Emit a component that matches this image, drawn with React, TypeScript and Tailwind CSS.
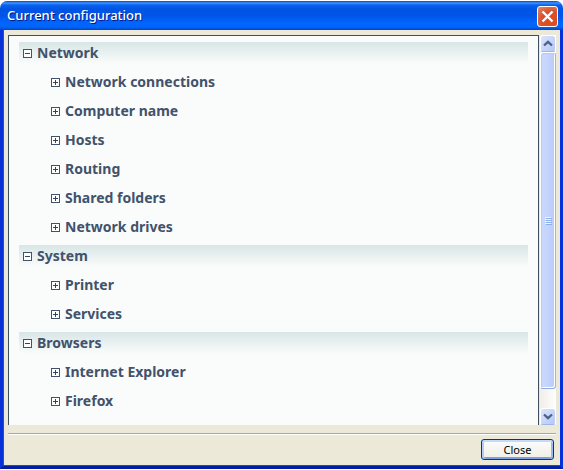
import { useState } from "react";
import { clsx } from "clsx";

type Section = {
  title: string;
  items: string[];
};

const sections: Section[] = [
  {
    title: "Network",
    items: ["Network connections", "Computer name", "Hosts", "Routing", "Shared folders", "Network drives"],
  },
  { title: "System", items: ["Printer", "Services"] },
  { title: "Browsers", items: ["Internet Explorer", "Firefox"] },
];

function ToggleBox({ open }: { open: boolean }) {
  return (
    <svg width="9" height="9" viewBox="0 0 9 9" shapeRendering="crispEdges" className="shrink-0" aria-hidden="true">
      <path d="M0.5 0.5h8v8h-8z" fill="#fff" stroke="#42526b" />
      <path d={open ? "M2 4.5h5" : "M2 4.5h5M4.5 2v5"} stroke="#34445c" />
    </svg>
  );
}

function TreeItem({ label }: { label: string }) {
  const [open, setOpen] = useState(false);

  return (
    <li className="flex h-[22px] pl-8">
      <button type="button" aria-expanded={open} onClick={() => setOpen(!open)} className="flex items-center gap-[5px]">
        <ToggleBox open={open} />
        <span>{label}</span>
      </button>
    </li>
  );
}

function TreeSection({ title, items }: Section) {
  const [open, setOpen] = useState(true);

  return (
    <li className="flex flex-col gap-[7px]">
      <button
        type="button"
        aria-expanded={open}
        onClick={() => setOpen(!open)}
        className="flex h-[22px] items-center gap-[5px] bg-linear-to-b from-[#d8e6e6] to-[#fafcfb] pl-1 text-left"
      >
        <ToggleBox open={open} />
        <span>{title}</span>
      </button>
      {open ? (
        <ul className="flex flex-col gap-[7px]">
          {items.map((item) => (
            <TreeItem key={item} label={item} />
          ))}
        </ul>
      ) : null}
    </li>
  );
}

function ScrollArrow({ direction }: { direction: "up" | "down" }) {
  return (
    <button
      type="button"
      aria-label={direction === "up" ? "Scroll up" : "Scroll down"}
      className="flex h-[17px] shrink-0 items-center justify-center rounded-[3px] border border-white border-b-[#9db5e8] bg-linear-to-br from-[#dbe5ff] to-[#b4c8f6]"
    >
      <svg
        width="10"
        height="7"
        viewBox="0 0 10 7"
        className={clsx(direction === "down" && "rotate-180")}
        aria-hidden="true"
      >
        <path d="M1 5.5 5 1.8 9 5.5" fill="none" stroke="#4d6185" strokeWidth="2.3" />
      </svg>
    </button>
  );
}

function ScrollBar() {
  return (
    <div className="flex w-4 shrink-0 flex-col bg-linear-to-r from-[#f0eee8] to-[#fefefb]">
      <ScrollArrow direction="up" />
      <div className="flex flex-1 flex-col pb-[19px]">
        <div className="flex flex-1 items-center justify-center rounded-[3px] border border-white border-r-[#9db5e8] border-b-[#8daae2] bg-linear-to-r from-[#cad8fc] via-[#c5d4fc] to-[#b7cafa] shadow-[inset_1px_1px_0_#b7c9f5,inset_-1px_-1px_0_#fff]">
          <svg width="7" height="8" viewBox="0 0 7 8" shapeRendering="crispEdges" aria-hidden="true">
            <path d="M0 .5h6M0 2.5h6M0 4.5h6M0 6.5h6" stroke="#eef4fe" />
            <path d="M1 1.5h6M1 3.5h6M1 5.5h6M1 7.5h6" stroke="#8caef0" />
          </svg>
        </div>
      </div>
      <ScrollArrow direction="down" />
    </div>
  );
}

function TitleBar() {
  return (
    <header className="flex h-[29px] items-center justify-between rounded-t-[7px] bg-[linear-gradient(#0a3fc4_0px,#3d95ff_2px,#0a62ee_4px,#0054e3_8px,#0055e8_15px,#0066ff_22px,#0065fb_26px,#0043c8_29px)] pt-px pr-[5px] pl-[7px]">
      <h1 className="font-['Noto_Sans',sans-serif] text-[13px] font-medium text-white [text-shadow:1px_1px_0_#0a1883]">
        Current configuration
      </h1>
      <button
        type="button"
        aria-label="Close window"
        className="flex size-[21px] items-center justify-center rounded-[3px] border border-white bg-[radial-gradient(circle_at_70%_75%,#e24a1a,#d9502c_50%,#e08a70_100%)]"
      >
        <svg width="15" height="15" viewBox="0 0 15 15" aria-hidden="true">
          <path d="m2.5 2.5 10 10M12.5 2.5l-10 10" stroke="#fff" strokeWidth="2.4" />
        </svg>
      </button>
    </header>
  );
}

export default function App() {
  return (
    <div className="flex min-h-screen flex-col bg-white py-px font-['Noto_Sans',sans-serif]">
      <TitleBar />
      <main className="flex flex-1 flex-col border-x-3 border-b-3 border-[#0831d9] border-b-[#001ea0] bg-[#ece9d8] pt-[5px] pr-1 pl-[5px] shadow-[inset_1px_0_0_#0855e8,inset_0_-1px_0_#0050ee]">
        <div className="flex flex-1 gap-px">
          <div className="flex-1 border border-b-0 border-[#41505f] bg-[#fafcfb] px-[10px] pt-[6px] pb-1">
            <ul className="flex flex-col gap-[7px] text-[14px] leading-5 font-bold text-[#42526b]">
              {sections.map((section) => (
                <TreeSection key={section.title} {...section} />
              ))}
            </ul>
          </div>
          <ScrollBar />
        </div>
        <footer className="mt-2 flex justify-end border-t border-[#aca899] pt-[5px] pr-[2px] pb-[6px] shadow-[inset_0_1px_0_#fff]">
          <button
            type="button"
            className="h-[21px] w-[73px] rounded-[3px] border border-[#003c74] bg-linear-to-b from-[#fcfcfb] to-[#efeee6] text-[11px] leading-4 text-black shadow-[inset_0_2px_0_#c5d9fb,inset_2px_0_0_#b2ccf6,inset_-2px_0_0_#9ab7ee,inset_0_-2px_0_#7f9fe4]"
          >
            Close
          </button>
        </footer>
      </main>
    </div>
  );
}
